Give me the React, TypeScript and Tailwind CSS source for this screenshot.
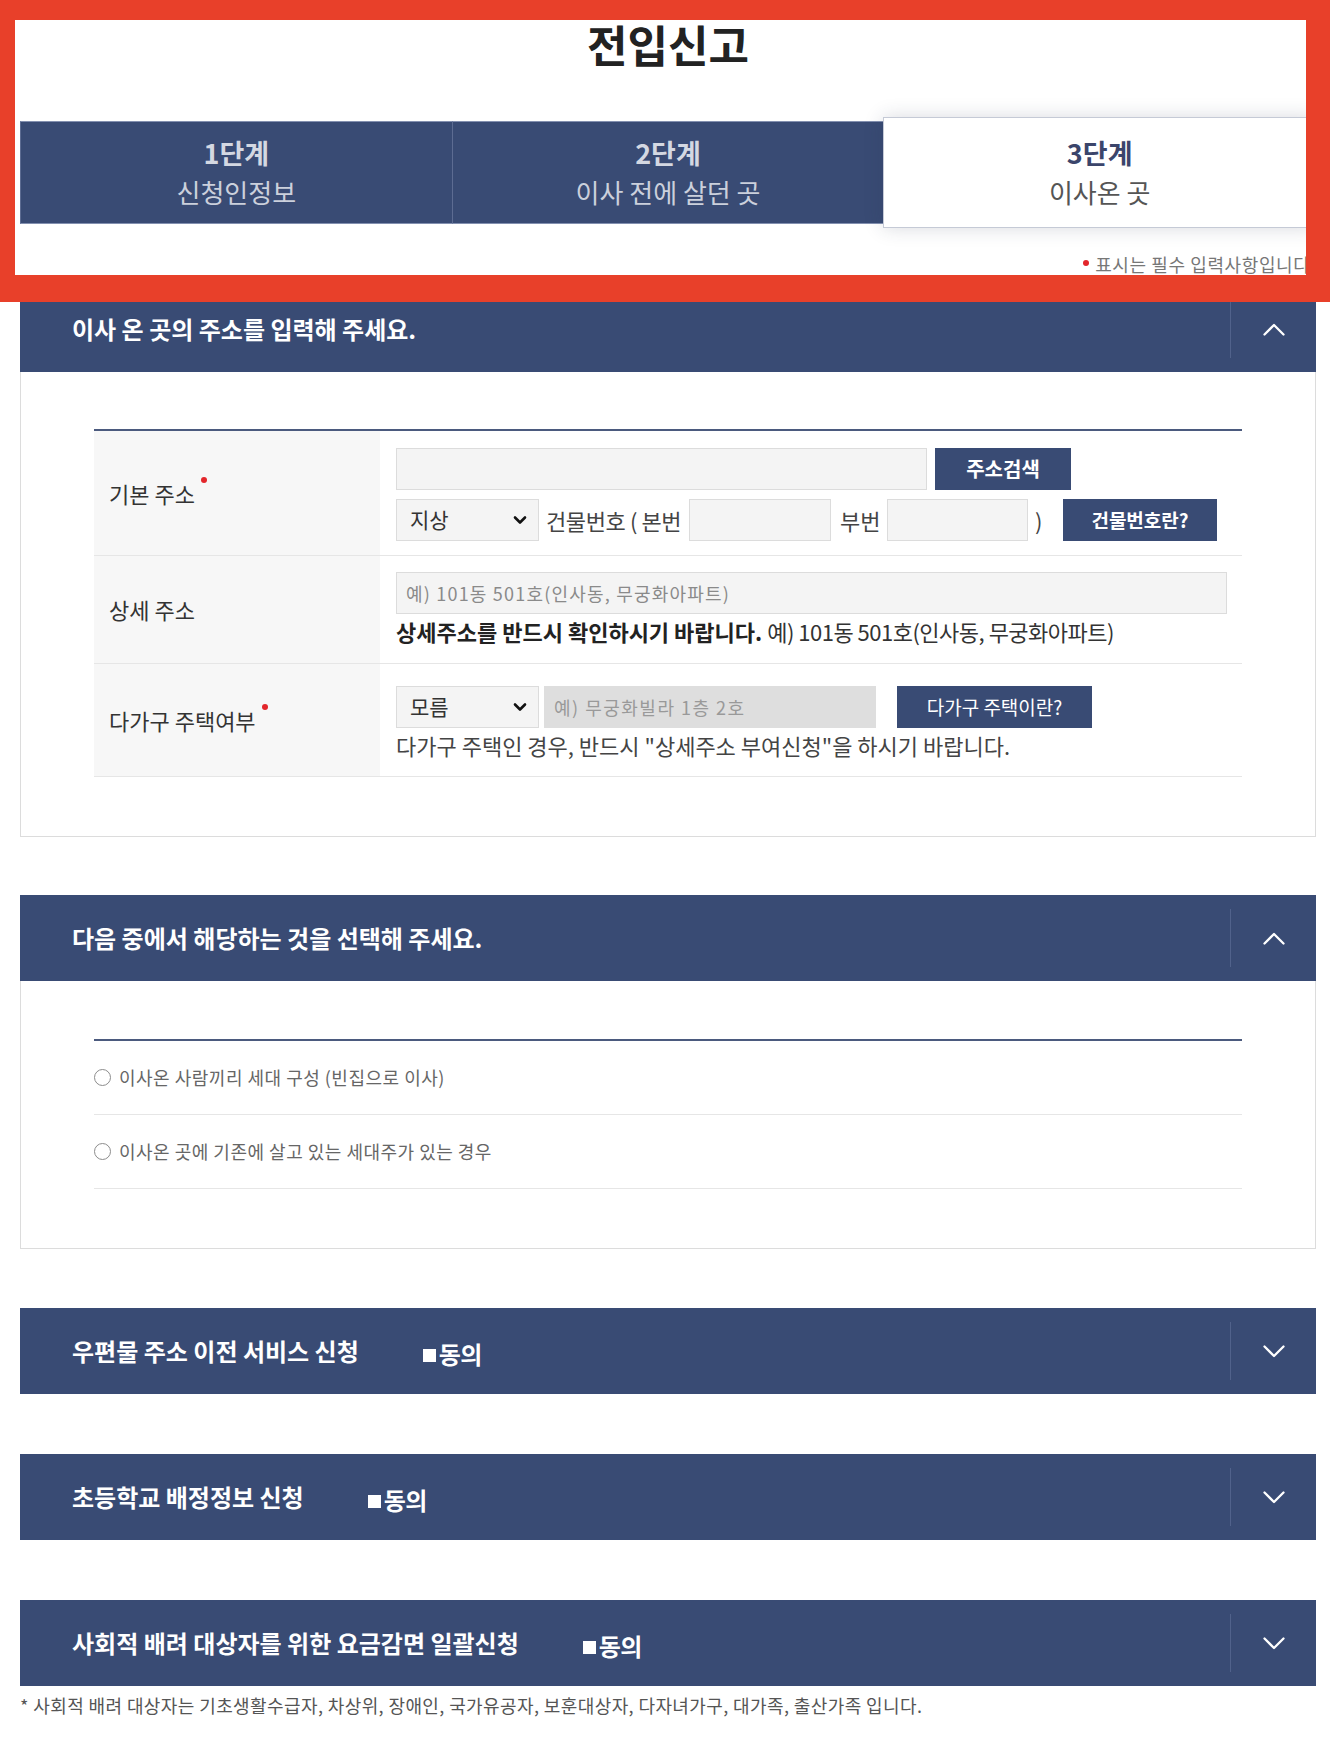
import React from "react";

function ChevronUp() {
  return (
    <svg width="22" height="13" viewBox="0 0 22 13" fill="none">
      <path d="M1.5 11.5 L11 2 L20.5 11.5" stroke="white" strokeWidth="2.3" strokeLinecap="round" strokeLinejoin="round" />
    </svg>
  );
}

function ChevronDown() {
  return (
    <svg width="22" height="13" viewBox="0 0 22 13" fill="none">
      <path d="M1.5 1.5 L11 11 L20.5 1.5" stroke="white" strokeWidth="2.3" strokeLinecap="round" strokeLinejoin="round" />
    </svg>
  );
}

function SectionHeader({ title, open, agree }: { title: string; open: boolean; agree?: boolean }) {
  return (
    <div className="flex h-[86px] items-center bg-[#394b74]">
      <div className="flex flex-1 items-center pl-[52px]">
        <span className="whitespace-nowrap text-[24px] font-bold leading-none tracking-[0px] text-white">{title}</span>
        {agree && (
          <span className="ml-[64px] mt-[5px] flex items-center whitespace-nowrap text-[24px] font-bold leading-none tracking-[-0.5px] text-white">
            <span className="mr-[3px] mt-[3px] inline-block h-[13px] w-[13px] bg-white" />
            동의
          </span>
        )}
      </div>
      <div className="h-[58px] w-px bg-[#51628b]" />
      <div className="flex w-[85px] items-center justify-center">{open ? <ChevronUp /> : <ChevronDown />}</div>
    </div>
  );
}

function FakeSelect({ value }: { value: string }) {
  return (
    <div className="flex h-[42px] w-[143px] shrink-0 items-center justify-between border border-[#dcdcdc] bg-[#f4f4f4] pl-[13px] pr-[11px] text-[21px] text-[#333]">
      <span>{value}</span>
      <svg width="14" height="10" viewBox="0 0 14 10" fill="none">
        <path d="M2 2.5 L7 7.5 L12 2.5" stroke="#111" strokeWidth="2.6" strokeLinecap="round" strokeLinejoin="round" />
      </svg>
    </div>
  );
}

function ReqDot() {
  return <span className="relative top-[-13px] ml-[6px] inline-block h-[6px] w-[6px] rounded-full bg-[#e3262b]" />;
}

function NavyButton({ label, w, bold, size }: { label: string; w: string; bold?: boolean; size: string }) {
  return (
    <div
      className={
        "flex h-[42px] shrink-0 items-center justify-center bg-[#394b74] tracking-[0px] text-white " +
        size +
        " " +
        w +
        (bold ? " font-bold" : "")
      }
    >
      {label}
    </div>
  );
}

function Step({ num, label, active }: { num: string; label: string; active?: boolean }) {
  if (active) {
    return (
      <div className="relative z-10 -my-[4px] flex flex-1 flex-col items-center justify-center border border-[#c5cad6] bg-white shadow-[0_0_18px_rgba(40,50,80,0.18)]">
        <div className="text-[27px] font-bold leading-[38px] text-[#3b456b]">{num}</div>
        <div className="text-[26px] leading-[40px] text-[#555]">{label}</div>
      </div>
    );
  }
  return (
    <div className="flex flex-1 flex-col items-center justify-center border-y border-l border-[#5d6c92] border-y-[#8390b0] bg-[#394b74]">
      <div className="text-[27px] font-bold leading-[38px] text-[#d4d8e2]">{num}</div>
      <div className="text-[26px] leading-[40px] text-[#cbd0dc]">{label}</div>
    </div>
  );
}

export default function App() {
  return (
    <div className="relative min-h-[1738px] w-[1330px] bg-white font-['Noto_Sans_CJK_KR','Noto_Sans',sans-serif]">
      <div className="ml-[20px] w-[1296px]">
        {/* Title */}
        <div className="h-[121px] pt-[20px] text-center text-[44px] font-bold leading-[48px] text-[#222]">전입신고</div>

        {/* Steps */}
        <div className="flex h-[103px]">
          <Step num="1단계" label="신청인정보" />
          <Step num="2단계" label="이사 전에 살던 곳" />
          <Step num="3단계" label="이사온 곳" active />
        </div>

        {/* Required note */}
        <div className="flex h-[62px] items-end justify-end pb-[12px]">
          <span className="relative top-[-8px] mr-[6px] inline-block h-[6px] w-[6px] rounded-full bg-[#e3262b]" />
          <span className="whitespace-nowrap text-[18px] leading-[20px] tracking-[0.6px] text-[#777]">표시는 필수 입력사항입니다.</span>
        </div>

        {/* Section 1 */}
        <SectionHeader title="이사 온 곳의 주소를 입력해 주세요." open />
        <div className="border-x border-b border-[#dcdcdc] px-[73px] pb-[59px] pt-[57px]">
          <div className="border-t-2 border-[#4b5a7e]">
            {/* Row 1 */}
            <div className="flex border-b border-[#e6e6e6]">
              <div className="flex w-[286px] shrink-0 items-center bg-[#f7f7f7] pl-[15px] text-[22px] text-[#333]">
                기본 주소
                <ReqDot />
              </div>
              <div className="flex-1 pb-[14px] pl-[16px] pt-[17px]">
                <div className="flex items-center">
                  <div className="h-[42px] w-[531px] shrink-0 border border-[#dcdcdc] bg-[#f4f4f4]" />
                  <div className="ml-[8px]">
                    <NavyButton label="주소검색" w="w-[136px]" bold size="text-[20px]" />
                  </div>
                </div>
                <div className="mt-[9px] flex items-center text-[22px] text-[#444]">
                  <FakeSelect value="지상" />
                  <span className="ml-[7px] w-[137px] shrink-0 whitespace-nowrap tracking-[-0.4px]">건물번호 ( 본번</span>
                  <div className="ml-[6px] h-[42px] w-[142px] shrink-0 border border-[#dcdcdc] bg-[#f4f4f4]" />
                  <span className="ml-[9px] w-[40px] shrink-0 whitespace-nowrap">부번</span>
                  <div className="ml-[7px] h-[42px] w-[141px] shrink-0 border border-[#dcdcdc] bg-[#f4f4f4]" />
                  <span className="ml-[7px] w-[7px] shrink-0">)</span>
                  <div className="ml-[21px]">
                    <NavyButton label="건물번호란?" w="w-[154px]" bold size="text-[19px]" />
                  </div>
                </div>
              </div>
            </div>

            {/* Row 2 */}
            <div className="flex border-b border-[#e6e6e6]">
              <div className="flex w-[286px] shrink-0 items-center bg-[#f7f7f7] pl-[15px] text-[22px] text-[#333]">
                상세 주소
              </div>
              <div className="flex-1 pb-[19px] pl-[16px] pt-[16px]">
                <div className="flex h-[42px] w-[831px] items-center border border-[#dcdcdc] bg-[#f4f4f4] pl-[9px] text-[18px] tracking-[1.2px] text-[#8a8a8a]">
                  예) 101동 501호(인사동, 무궁화아파트)
                </div>
                <div className="mt-[4px] whitespace-nowrap text-[22px] leading-[26px]">
                  <span className="font-bold tracking-[0px] text-[#222]">상세주소를 반드시 확인하시기 바랍니다.</span>{" "}
                  <span className="tracking-[-0.5px] text-[#333]">예) 101동 501호(인사동, 무궁화아파트)</span>
                </div>
              </div>
            </div>

            {/* Row 3 */}
            <div className="flex border-b border-[#e6e6e6]">
              <div className="flex w-[286px] shrink-0 items-center bg-[#f7f7f7] pl-[15px] text-[22px] text-[#333]">
                다가구 주택여부
                <ReqDot />
              </div>
              <div className="flex-1 pb-[18px] pl-[16px] pt-[22px]">
                <div className="flex items-center">
                  <FakeSelect value="모름" />
                  <div className="ml-[5px] flex h-[42px] w-[332px] shrink-0 items-center bg-[#dedede] pl-[10px] text-[18px] tracking-[1.5px] text-[#999]">
                    예) 무궁화빌라 1층 2호
                  </div>
                  <div className="ml-[21px]">
                    <NavyButton label="다가구 주택이란?" w="w-[195px]" size="text-[19px]" />
                  </div>
                </div>
                <div className="mt-[4px] whitespace-nowrap text-[22px] leading-[26px] tracking-[0px] text-[#444]">
                  다가구 주택인 경우, 반드시 "상세주소 부여신청"을 하시기 바랍니다.
                </div>
              </div>
            </div>
          </div>
        </div>

        {/* Section 2 */}
        <div className="mt-[58px]">
          <SectionHeader title="다음 중에서 해당하는 것을 선택해 주세요." open />
          <div className="border-x border-b border-[#dcdcdc] px-[73px] pb-[59px] pt-[58px]">
            <div className="border-t-2 border-[#4b5a7e]">
              <div className="flex h-[74px] items-center border-b border-[#e6e6e6]">
                <span className="inline-block h-[17px] w-[17px] rounded-full border border-[#8c8c8c] bg-white" />
                <span className="ml-[8px] text-[18px] tracking-[0.5px] text-[#666]">이사온 사람끼리 세대 구성 (빈집으로 이사)</span>
              </div>
              <div className="flex h-[74px] items-center border-b border-[#e6e6e6]">
                <span className="inline-block h-[17px] w-[17px] rounded-full border border-[#8c8c8c] bg-white" />
                <span className="ml-[8px] text-[18px] tracking-[0.5px] text-[#666]">이사온 곳에 기존에 살고 있는 세대주가 있는 경우</span>
              </div>
            </div>
          </div>
        </div>

        {/* Section 3-5 */}
        <div className="mt-[59px]">
          <SectionHeader title="우편물 주소 이전 서비스 신청" open={false} agree />
        </div>
        <div className="mt-[60px]">
          <SectionHeader title="초등학교 배정정보 신청" open={false} agree />
        </div>
        <div className="mt-[60px]">
          <SectionHeader title="사회적 배려 대상자를 위한 요금감면 일괄신청" open={false} agree />
        </div>

        <div className="mt-[8px] whitespace-nowrap text-[18px] leading-[22px] tracking-[0.4px] text-[#555]">
          * 사회적 배려 대상자는 기초생활수급자, 차상위, 장애인, 국가유공자, 보훈대상자, 다자녀가구, 대가족, 출산가족 입니다.
        </div>
      </div>

      {/* Red highlight frame overlay */}
      <div className="pointer-events-none absolute left-0 top-0 z-20 h-[302px] w-[1330px] border-b-[27px] border-l-[15px] border-r-[24px] border-t-[20px] border-[#e8402a]" />
    </div>
  );
}
